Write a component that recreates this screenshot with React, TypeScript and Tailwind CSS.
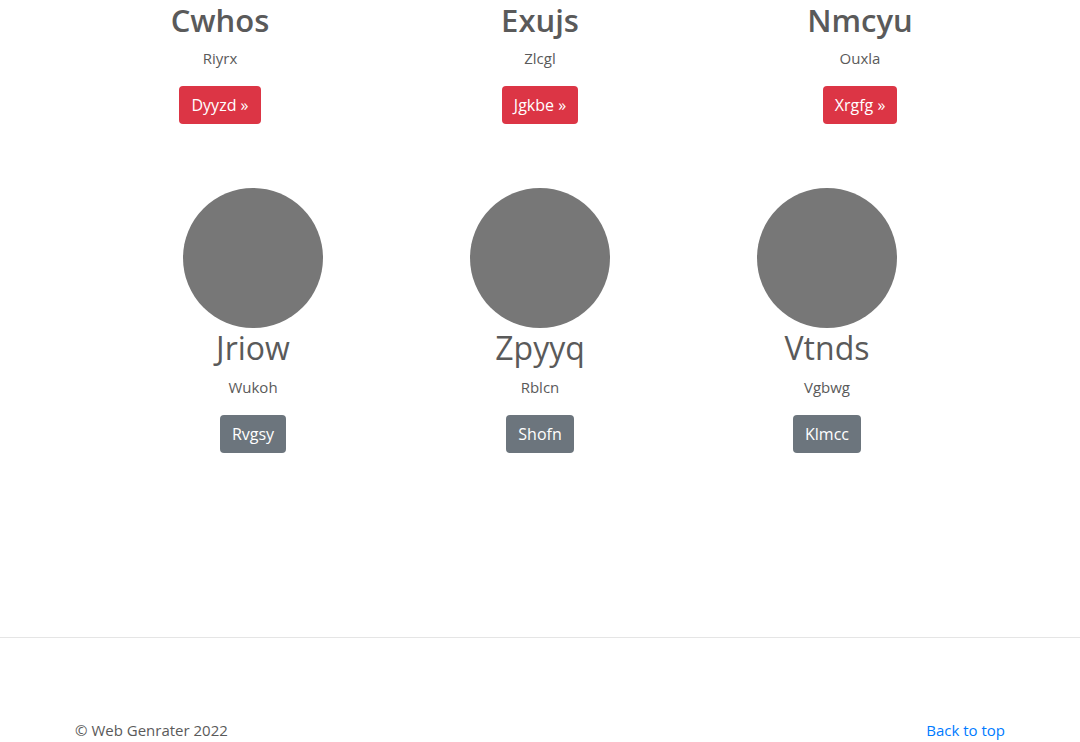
import React from "react";

const top = [
  { title: "Cwhos", sub: "Riyrx", btn: "Dyyzd" },
  { title: "Exujs", sub: "Zlcgl", btn: "Jgkbe" },
  { title: "Nmcyu", sub: "Ouxla", btn: "Xrgfg" },
];

const people = [
  { name: "Jriow", sub: "Wukoh", btn: "Rvgsy" },
  { name: "Zpyyq", sub: "Rblcn", btn: "Shofn" },
  { name: "Vtnds", sub: "Vgbwg", btn: "Klmcc" },
];

export default function App() {
  return (
    <div className="min-h-[742px] bg-white text-[#5a5a5a] font-['Open_Sans',sans-serif] text-[16px] leading-[24px] flex flex-col">
      <div className="w-[960px] mx-auto px-[15px] pt-[1px]">
        <div className="grid grid-cols-3 -mx-[15px]">
          {top.map((c) => (
            <div key={c.title} className="flex flex-col items-center text-center">
              <h2 className="text-[31px] leading-[38px] font-semibold mb-[7px]">{c.title}</h2>
              <p className="text-[15px] mb-4">{c.sub}</p>
              <button className="bg-[#dc3545] text-white rounded-[4px] px-3 h-[38px] text-[16px]">
                {c.btn} &raquo;
              </button>
            </div>
          ))}
        </div>
      </div>

      <div className="w-[861px] mx-auto grid grid-cols-3 mt-[64px]">
        {people.map((p) => (
          <div key={p.name} className="flex flex-col items-center text-center">
            <div className="w-[140px] h-[140px] rounded-full bg-[#777777]" />
            <h2 className="text-[32px] leading-[38px] font-normal mt-[1px] mb-2">{p.name}</h2>
            <p className="text-[15px] mb-4">{p.sub}</p>
            <button className="bg-[#6c757d] text-white rounded-[4px] px-3 h-[38px] text-[16px]">
              {p.btn}
            </button>
          </div>
        ))}
      </div>

      <div className="flex-1" />
      <hr className="border-t border-[#e5e5e5] mt-[184px]" />
      <footer className="w-[960px] mx-auto px-[15px] pt-[80px] pb-[2px] flex justify-between text-[15px]">
        <p>&copy; Web Genrater 2022</p>
        <a href="#" className="text-[#007bff]">Back to top</a>
      </footer>
    </div>
  );
}
